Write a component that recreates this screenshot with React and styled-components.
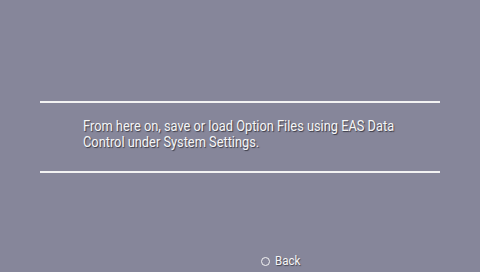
import React from "react";
import styled, { createGlobalStyle } from "styled-components";

const GlobalStyle = createGlobalStyle`
  html, body {
    margin: 0;
    padding: 0;
    background: #86869a;
  }
`;

const Screen = styled.div`
  width: 480px;
  height: 272px;
  background: #86869a;
  display: flex;
  flex-direction: column;
  align-items: center;
  font-family: Roboto, "Liberation Sans", sans-serif;
  color: #f6f6f6;
  overflow: hidden;
`;

const Panel = styled.div`
  width: 400px;
  margin-top: 101px;
  border-top: 2px solid #f2f2f2;
  border-bottom: 2px solid #f2f2f2;
  height: 68px;
  box-sizing: content-box;
  display: flex;
  align-items: center;
`;

const Message = styled.p`
  margin: 0 0 6px 43px;
  font-size: 14px;
  line-height: 16px;
  white-space: nowrap;
  transform: scaleX(0.915);
  transform-origin: left center;
  text-shadow: 1px 1px 1px rgba(40, 40, 50, 0.8);
`;

const Footer = styled.div`
  margin-top: 80px;
  margin-left: 84px;
  display: flex;
  align-items: center;
  gap: 5px;
  font-size: 12.5px;
  text-shadow: 1px 1px 1px rgba(40, 40, 50, 0.7);
`;

const Circle = styled.span`
  width: 7px;
  height: 7px;
  border: 1.5px solid #f4f4f4;
  border-radius: 50%;
  margin-top: 2px;
`;

const Label = styled.span`
  display: inline-block;
  transform: scaleX(0.92);
  transform-origin: left center;
`;

export default function App() {
  return (
    <Screen>
      <GlobalStyle />
      <Panel>
        <Message>
          From here on, save or load Option Files using EAS Data
          <br />
          Control under System Settings.
        </Message>
      </Panel>
      <Footer>
        <Circle />
        <Label>Back</Label>
      </Footer>
    </Screen>
  );
}
